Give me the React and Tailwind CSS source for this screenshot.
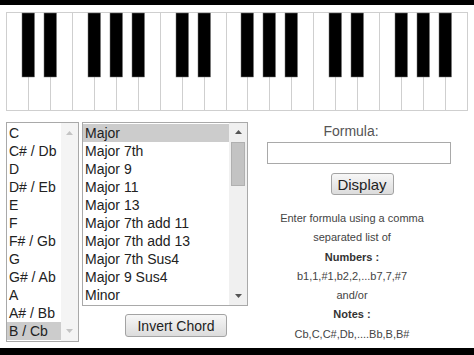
import React from "react"

const roots = ["C", "C# / Db", "D", "D# / Eb", "E", "F", "F# / Gb", "G", "G# / Ab", "A", "A# / Bb", "B / Cb"]
const chords = [
  "Major",
  "Major 7th",
  "Major 9",
  "Major 11",
  "Major 13",
  "Major 7th add 11",
  "Major 7th add 13",
  "Major 7th Sus4",
  "Major 9 Sus4",
  "Minor",
]

const Keyboard = () => {
  const x0 = 6
  const w = 461 / 21
  const top = 7.5
  const bottom = 105.5
  // black keys sit on these white-key boundaries (per octave: after C, D, F, G, A)
  const blackAfter = []
  for (let o = 0; o < 3; o++) {
    ;[1, 2, 4, 5, 6].forEach((i) => blackAfter.push(o * 7 + i))
  }
  return (
    <svg width="474" height="107" viewBox="0 0 474 107" className="block">
      <rect x={x0 + 0.5} y={top} width={461} height={bottom - top} fill="#fff" stroke="#cfcfcf" strokeWidth="1" />
      {Array.from({ length: 20 }, (_, i) => {
        const x = Math.round(x0 + (i + 1) * w) + 0.5
        return <line key={i} x1={x} y1={top} x2={x} y2={bottom} stroke="#cfcfcf" strokeWidth="1" />
      })}
      {blackAfter.map((i) => {
        const cx = x0 + i * w
        return <rect key={i} x={Math.round(cx - 6)} y={8} width={12.5} height={64} fill="#000" stroke="#777" strokeWidth="0.5" />
      })}
    </svg>
  )
}

const Arrow = ({ up, color }) => (
  <svg width="7" height="4" viewBox="0 0 7 4">
    {up ? <path d="M0 4 L3.5 0 L7 4 Z" fill={color} /> : <path d="M0 0 L3.5 4 L7 0 Z" fill={color} />}
  </svg>
)

const Button = ({ children, className }) => (
  <button
    className={`border border-[#a3a3a3] rounded-[3px] bg-gradient-to-b from-[#f7f7f7] to-[#dcdcdc] text-[#222] leading-none ${className}`}
  >
    {children}
  </button>
)

export default function App() {
  return (
    <div className="w-[474px] h-[355px] bg-white overflow-hidden flex flex-col font-['Liberation_Sans',Arial,sans-serif]">
      <div className="h-[5px] bg-black" />
      <Keyboard />

      <div className="flex mt-[10px]">
        {/* root notes */}
        <div className="ml-[6px] w-[73px] h-[220px] border border-[#a9a9a9] flex bg-white">
          <div className="flex-1 pt-px">
            {roots.map((r, i) => (
              <div
                key={r}
                className={`h-[18px] pl-[2px] text-[14px] leading-[18px] text-[#222] whitespace-nowrap ${
                  i === roots.length - 1 ? "bg-[#cccccc]" : ""
                }`}
              >
                {r}
              </div>
            ))}
          </div>
          <div className="w-[17px] bg-[#f4f4f4] flex flex-col justify-between items-center py-[8px]">
            <Arrow up color="#c4c4c4" />
            <Arrow color="#c4c4c4" />
          </div>
        </div>

        {/* chord types */}
        <div className="ml-[3px] w-[166px] flex flex-col">
          <div className="h-[184px] border border-[#a9a9a9] flex bg-white">
            <div className="flex-1 pt-px">
              {chords.map((c, i) => (
                <div
                  key={c}
                  className={`h-[18px] pl-[2px] text-[14px] leading-[18px] text-[#222] whitespace-nowrap ${
                    i === 0 ? "bg-[#cccccc]" : ""
                  }`}
                >
                  {c}
                </div>
              ))}
            </div>
            <div className="w-[18px] bg-[#f0f0f0] flex flex-col items-center">
              <div className="h-[18px] flex items-center justify-center">
                <Arrow up color="#555" />
              </div>
              <div className="w-[14px] h-[44px] mt-px bg-[#c3c3c3] border border-[#b0b0b0]" />
              <div className="flex-1" />
              <div className="h-[18px] flex items-center justify-center">
                <Arrow color="#555" />
              </div>
            </div>
          </div>
          <Button className="mt-[8px] ml-[43px] w-[102px] h-[23px] text-[14px]">Invert Chord</Button>
        </div>

        {/* formula */}
        <div className="w-[225px] pl-[19px] pt-px flex flex-col">
          <div className="w-[184px] pr-[16px] text-center text-[14px] leading-[16px] text-[#555]">Formula:</div>
          <div className="mt-[3px] w-[184px] h-[22px] border border-[#a9a9a9] bg-white" />
          <div className="w-[184px] pl-[6px] flex justify-center mt-[9px]">
            <Button className="w-[63px] h-[22px] text-[15px]">Display</Button>
          </div>
          <div className="w-[184px] pr-[14px] mt-[14px] text-center text-[11px] leading-[19.3px] text-[#444]">
            <div>Enter formula using a comma</div>
            <div>separated list of</div>
            <div className="font-bold text-[#333]">Numbers :</div>
            <div>b1,1,#1,b2,2,...b7,7,#7</div>
            <div>and/or</div>
            <div className="font-bold text-[#333]">Notes :</div>
            <div>Cb,C,C#,Db,....Bb,B,B#</div>
          </div>
        </div>
      </div>

      <div className="mt-auto h-[7px] bg-black" />
    </div>
  )
}
